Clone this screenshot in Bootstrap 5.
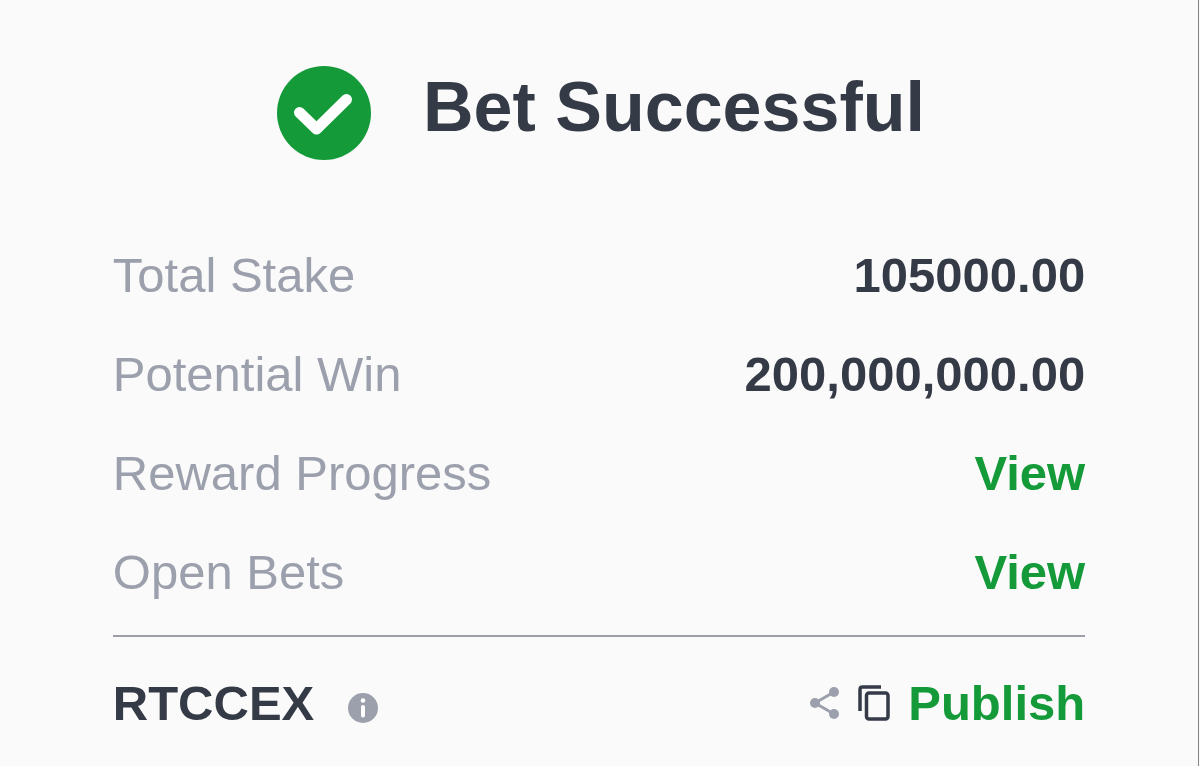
<!DOCTYPE html>
<html lang="en">
<head>
<meta charset="utf-8">
<meta name="viewport" content="width=device-width, initial-scale=1">
<title>Bet Successful</title>
<link rel="stylesheet" href="https://cdn.jsdelivr.net/npm/bootstrap@5.3.0/dist/css/bootstrap.min.css">
<style>
  body { background: #fafafa; color: #353a47; font-family: "Liberation Sans", Arial, sans-serif; font-size: 49px; line-height: 60px; }
  .slip { border-right: 1px solid #858585; margin-right: 1px; min-height: 100vh; padding: 66px 9.4% 0; }
  .slip-head { gap: 52px; margin-bottom: 65px; padding-left: 4px; }
  .slip-title { font-size: 70px; line-height: 82px; }
  .slip-line { height: 99px; }
  .slip-label { color: #9ca0ad; }
  .slip-action { color: #149a38; font-size: 49px; line-height: 60px; }
  .slip-rule { border-top: 2px solid #9c9fa6; margin: 14px 0 0; opacity: 1; }
  .slip-foot { height: 129px; padding-top: 2px; }
  .code-group { gap: 34px; }
  .icon-info { margin-top: 10px; }
  .share-group { gap: 18px; }
</style>
</head>
<body>
<main class="slip">
  <header class="slip-head d-flex justify-content-center align-items-start">
    <svg class="flex-shrink-0" width="94" height="94" viewBox="0 0 94 94" aria-hidden="true">
      <circle cx="47" cy="47" r="47" fill="#149a38"/>
      <path d="M22.500 46.500 39.500 63 69.500 33.500" fill="none" stroke="#fff" stroke-width="11" stroke-linecap="round" stroke-linejoin="round"/>
    </svg>
    <h1 class="slip-title fw-bold mb-0">Bet Successful</h1>
  </header>

  <section>
    <div class="slip-line d-flex justify-content-between align-items-center">
      <span class="slip-label">Total Stake</span><span class="fw-bold">105000.00</span>
    </div>
    <div class="slip-line d-flex justify-content-between align-items-center">
      <span class="slip-label">Potential Win</span><span class="fw-bold">200,000,000.00</span>
    </div>
    <div class="slip-line d-flex justify-content-between align-items-center">
      <span class="slip-label">Reward Progress</span><a class="slip-action fw-bold text-decoration-none" href="#rewards">View</a>
    </div>
    <div class="slip-line d-flex justify-content-between align-items-center">
      <span class="slip-label">Open Bets</span><a class="slip-action fw-bold text-decoration-none" href="#bets">View</a>
    </div>
  </section>

  <hr class="slip-rule">

  <footer class="slip-foot d-flex justify-content-between align-items-center">
    <div class="code-group d-flex align-items-center">
      <span class="fw-bold">RTCCEX</span>
      <button class="icon-info btn p-0 border-0 d-flex" type="button" aria-label="Booking code info">
        <svg width="30" height="30" viewBox="0 0 30 30">
          <circle cx="15" cy="15" r="15" fill="#9ca0ad"/>
          <circle cx="15" cy="7.500" r="2.300" fill="#fff"/>
          <path d="M15 14V22.500" stroke="#fff" stroke-width="4" stroke-linecap="round"/>
        </svg>
      </button>
    </div>
    <div class="share-group d-flex align-items-center">
      <button class="btn p-0 border-0 d-flex" type="button" aria-label="Share">
        <svg width="30" height="32" viewBox="0 0 30 32">
          <path d="M24 5 5 16 24 27" fill="none" stroke="#9ca0ad" stroke-width="3"/>
          <g fill="#9ca0ad"><circle cx="24" cy="5" r="5"/><circle cx="5" cy="16" r="5"/><circle cx="24" cy="27" r="5"/></g>
        </svg>
      </button>
      <button class="btn p-0 border-0 d-flex" type="button" aria-label="Copy code">
        <svg width="32" height="36" viewBox="0 0 32 36" fill="none" stroke="#353a47" stroke-width="3.500">
          <path d="M2 26V4.500Q2 2 4.500 2H23"/>
          <rect x="8.500" y="8" width="21.500" height="26" rx="2.500"/>
        </svg>
      </button>
      <button class="slip-action btn p-0 border-0 fw-bold" type="button">Publish</button>
    </div>
  </footer>
</main>
<script src="https://cdn.jsdelivr.net/npm/bootstrap@5.3.0/dist/js/bootstrap.bundle.min.js"></script>
</body>
</html>
